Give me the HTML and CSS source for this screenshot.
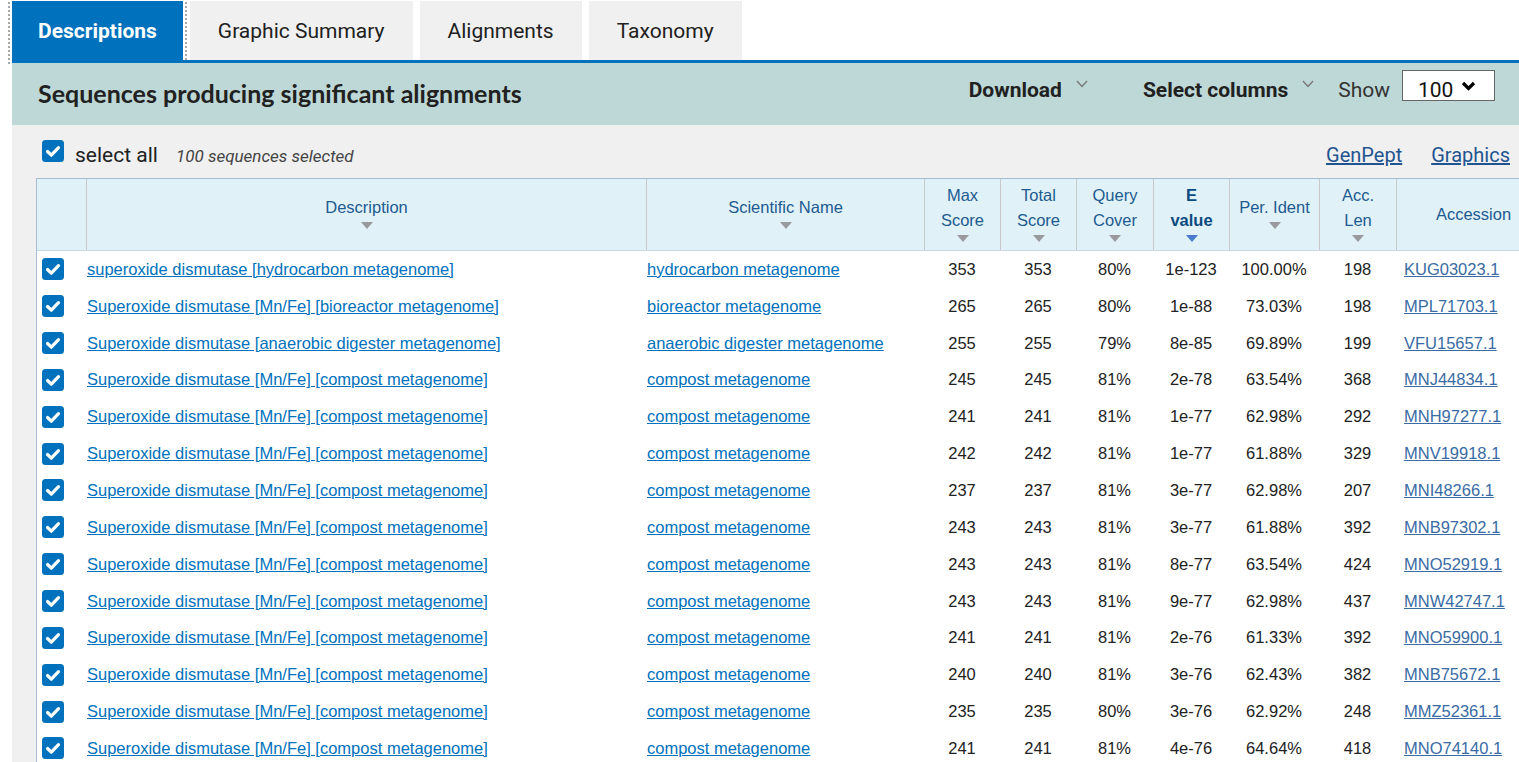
FILE: index.html
```html
<!DOCTYPE html>
<html>
<head>
<meta charset="utf-8">
<link rel="stylesheet" href="styles.css">
</head>
<body>
<div class="page">
  <div class="tabs">
    <div class="tab active">Descriptions</div>
    <div class="tab">Graphic Summary</div>
    <div class="tab">Alignments</div>
    <div class="tab">Taxonomy</div>
  </div>
  <div class="bar">
    <h1 class="title">Sequences producing significant alignments</h1>
    <div class="tools">
      <span class="tool">Download<svg class="chev" width="12" height="8" viewBox="0 0 12 8"><path d="M1 1 L6 6.5 L11 1" fill="none" stroke="#777" stroke-width="1.3"/></svg></span>
      <span class="tool">Select columns<svg class="chev" width="12" height="8" viewBox="0 0 12 8"><path d="M1 1 L6 6.5 L11 1" fill="none" stroke="#777" stroke-width="1.3"/></svg></span>
      <span class="show">Show</span>
      <span class="select-box">100<svg class="chev-bold" width="15" height="10" viewBox="0 0 15 10"><path d="M2 2 L7.5 7.5 L13 2" fill="none" stroke="#000" stroke-width="3.2"/></svg></span>
    </div>
  </div>
  <div class="results">
    <div class="results-top">
      <div class="select-all">
        <svg class="cb" width="22" height="22" viewBox="0 0 22 22"><rect x="0" y="0" width="22" height="22" rx="3.5" fill="#0071bc"/><path d="M5.5 11.5 L9.3 15.2 L16.5 7.6" fill="none" stroke="#fff" stroke-width="3.2" stroke-linecap="round" stroke-linejoin="round"/></svg>
        <span class="sa-label">select all</span>
        <em class="sa-count">100 sequences selected</em>
      </div>
      <div class="top-links">
        <a href="#">GenPept</a>
        <a href="#">Graphics</a>
      </div>
    </div>
    <table class="results-table">
      <colgroup>
        <col class="c-cb"><col class="c-desc"><col class="c-sci"><col class="c-num"><col class="c-num"><col class="c-qc"><col class="c-num"><col class="c-pi"><col class="c-qc"><col class="c-acc">
      </colgroup>
      <thead>
        <tr>
          <th class="first"></th>
          <th>Description<span class="sort"></span></th>
          <th>Scientific Name<span class="sort"></span></th>
          <th>Max<br>Score<span class="sort"></span></th>
          <th>Total<br>Score<span class="sort"></span></th>
          <th>Query<br>Cover<span class="sort"></span></th>
          <th class="active">E<br>value<span class="sort"></span></th>
          <th>Per. Ident<span class="sort"></span></th>
          <th>Acc.<br>Len<span class="sort"></span></th>
          <th>Accession</th>
        </tr>
      </thead>
      <tbody id="rows"></tbody>
    </table>
  </div>
</div>
<script src="script.js"></script>
</body>
</html>
```
FILE: script.js
```js
var data = [
  ["superoxide dismutase [hydrocarbon metagenome]", "hydrocarbon metagenome", "353", "353", "80%", "1e-123", "100.00%", "198", "KUG03023.1"],
  ["Superoxide dismutase [Mn/Fe] [bioreactor metagenome]", "bioreactor metagenome", "265", "265", "80%", "1e-88", "73.03%", "198", "MPL71703.1"],
  ["Superoxide dismutase [anaerobic digester metagenome]", "anaerobic digester metagenome", "255", "255", "79%", "8e-85", "69.89%", "199", "VFU15657.1"],
  ["Superoxide dismutase [Mn/Fe] [compost metagenome]", "compost metagenome", "245", "245", "81%", "2e-78", "63.54%", "368", "MNJ44834.1"],
  ["Superoxide dismutase [Mn/Fe] [compost metagenome]", "compost metagenome", "241", "241", "81%", "1e-77", "62.98%", "292", "MNH97277.1"],
  ["Superoxide dismutase [Mn/Fe] [compost metagenome]", "compost metagenome", "242", "242", "81%", "1e-77", "61.88%", "329", "MNV19918.1"],
  ["Superoxide dismutase [Mn/Fe] [compost metagenome]", "compost metagenome", "237", "237", "81%", "3e-77", "62.98%", "207", "MNI48266.1"],
  ["Superoxide dismutase [Mn/Fe] [compost metagenome]", "compost metagenome", "243", "243", "81%", "3e-77", "61.88%", "392", "MNB97302.1"],
  ["Superoxide dismutase [Mn/Fe] [compost metagenome]", "compost metagenome", "243", "243", "81%", "8e-77", "63.54%", "424", "MNO52919.1"],
  ["Superoxide dismutase [Mn/Fe] [compost metagenome]", "compost metagenome", "243", "243", "81%", "9e-77", "62.98%", "437", "MNW42747.1"],
  ["Superoxide dismutase [Mn/Fe] [compost metagenome]", "compost metagenome", "241", "241", "81%", "2e-76", "61.33%", "392", "MNO59900.1"],
  ["Superoxide dismutase [Mn/Fe] [compost metagenome]", "compost metagenome", "240", "240", "81%", "3e-76", "62.43%", "382", "MNB75672.1"],
  ["Superoxide dismutase [Mn/Fe] [compost metagenome]", "compost metagenome", "235", "235", "80%", "3e-76", "62.92%", "248", "MMZ52361.1"],
  ["Superoxide dismutase [Mn/Fe] [compost metagenome]", "compost metagenome", "241", "241", "81%", "4e-76", "64.64%", "418", "MNO74140.1"]
];
var cb = '<svg class="cb" width="22" height="22" viewBox="0 0 22 22"><rect x="0" y="0" width="22" height="22" rx="3.5" fill="#0071bc"/><path d="M5.5 11.5 L9.3 15.2 L16.5 7.6" fill="none" stroke="#fff" stroke-width="3.2" stroke-linecap="round" stroke-linejoin="round"/></svg>';
var html = "";
data.forEach(function (r) {
  html += '<tr><td class="cbc">' + cb + '</td>' +
    '<td class="desc"><a href="#">' + r[0] + '</a></td>' +
    '<td class="sci"><a href="#">' + r[1] + '</a></td>' +
    '<td class="num">' + r[2] + '</td><td class="num">' + r[3] + '</td><td class="num">' + r[4] + '</td>' +
    '<td class="num">' + r[5] + '</td><td class="num">' + r[6] + '</td><td class="num">' + r[7] + '</td>' +
    '<td class="acc"><a href="#">' + r[8] + '</a></td></tr>';
});
document.getElementById("rows").innerHTML = html;
```
FILE: styles.css
```css
html, body {
  margin: 0;
  padding: 0;
  overflow: hidden;
  background: #fff;
}

.page {
  padding: 1px 0 0 12px;
}

.tabs {
  display: flex;
  gap: 7px;
  height: 59px;
}

.tab {
  font-family: Roboto, "Liberation Sans", sans-serif;
  font-size: 21px;
  line-height: 58px;
  padding: 1px 28px 0;
  background: #f0f0f0;
  color: #212121;
}

.tab.active {
  background: #0071bc;
  color: #fff;
  font-weight: 700;
  padding: 1px 26px 0;
  outline: 2px dotted #a8a8a8;
  outline-offset: 2px;
}

.bar {
  position: relative;
  border-top: 3px solid #0071bc;
  background: #bdd8d6;
  height: 62px;
  display: flex;
  padding: 0 24px 0 26px;
}

.title {
  margin: 0;
  flex: 1;
  align-self: center;
  font-family: Lato, "Open Sans", sans-serif;
  font-weight: 700;
  font-size: 25px;
  line-height: 30px;
  color: #212121;
  padding-bottom: 3px;
}

.tools {
  align-self: flex-start;
  margin-top: 7px;
  display: flex;
  align-items: baseline;
}

.tool {
  font-family: Roboto, "Liberation Sans", sans-serif;
  font-weight: 700;
  font-size: 21px;
  color: #212121;
  margin-right: 55px;
}

.tool + .tool {
  margin-right: 24px;
}

.chev {
  margin-left: 14px;
  vertical-align: 9px;
}

.show {
  font-family: Roboto, "Liberation Sans", sans-serif;
  font-size: 21px;
  color: #333;
  margin-right: 12px;
}

.select-box {
  box-sizing: border-box;
  width: 93px;
  height: 31px;
  border: 1px solid #666;
  background: #fff;
  padding: 9px 0 0 15px;
  font-family: Roboto, "Liberation Sans", sans-serif;
  font-size: 21px;
  line-height: 20px;
  color: #111;
}

.chev-bold {
  margin-left: 8px;
  vertical-align: 6px;
}

.results {
  background: #f0f0f0;
  padding-left: 24px;
  height: 700px;
}

.results-top {
  box-sizing: border-box;
  height: 53px;
  padding: 15px 9px 0 6px;
  display: flex;
  justify-content: space-between;
  align-items: baseline;
}

.select-all {
  display: flex;
  align-items: baseline;
}

.cb {
  display: block;
}

.select-all .cb {
  margin-bottom: 1px;
}

.sa-label {
  font-family: Roboto, "Liberation Sans", sans-serif;
  font-size: 21px;
  color: #212121;
  margin-left: 11px;
}

.sa-count {
  font-family: Roboto, "Liberation Sans", sans-serif;
  font-size: 17px;
  color: #444;
  margin-left: 18px;
}

.top-links {
  display: flex;
  gap: 29px;
}

.top-links a {
  font-family: Roboto, "Liberation Sans", sans-serif;
  font-size: 20px;
  color: #1f5490;
  text-decoration: underline;
}

.results-table {
  border-collapse: separate;
  border-spacing: 0;
  table-layout: fixed;
  width: 1514px;
  border-top: 1px solid #a7bbd2;
  border-left: 1px solid #a7bbd2;
  font-family: "Liberation Sans", Arial, sans-serif;
  font-size: 16.5px;
}

.c-cb { width: 49px; }
.c-desc { width: 560px; }
.c-sci { width: 278px; }
.c-num { width: 76px; }
.c-qc { width: 77px; }
.c-pi { width: 90px; }
.c-acc { width: 154px; }

.results-table thead tr {
  height: 72px;
}

.results-table th {
  background: #e1f1f8;
  color: #1d5b90;
  font-weight: 400;
  line-height: 25px;
  padding: 0;
  vertical-align: middle;
  text-align: center;
  border-left: 1px solid #c9c9c9;
  border-bottom: 1px solid #c8d9e6;
}

.results-table th.first {
  border-left: none;
}

.results-table th.active {
  color: #0b4a80;
  font-weight: 700;
}

.sort {
  display: block;
  width: 0;
  height: 0;
  margin: 2px auto 5px;
  border-left: 6.5px solid transparent;
  border-right: 6.5px solid transparent;
  border-top: 7px solid #999a9e;
}

th.active .sort {
  border-top-color: #4a7bcf;
}

.results-table tbody tr {
  height: 36.85px;
}

.results-table td {
  background: #fff;
  padding: 0;
  color: #222;
  vertical-align: middle;
  white-space: nowrap;
}

.results-table td.cbc {
  padding-left: 5px;
}

.results-table td.desc,
.results-table td.sci {
  padding-left: 1px;
}

.results-table td.num {
  text-align: center;
}

.results-table td.acc {
  padding-left: 8px;
}

.desc a,
.sci a {
  color: #0071bc;
  text-decoration: underline;
}

.acc a {
  color: #3a6ba4;
  text-decoration: underline;
}
```
